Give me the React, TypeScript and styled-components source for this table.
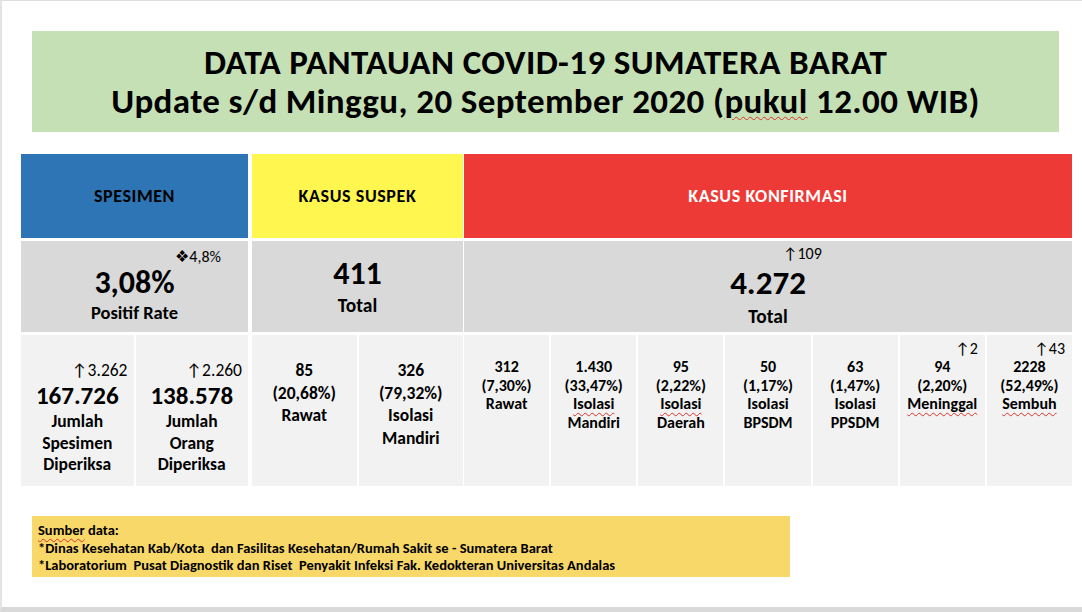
import React from "react";
import styled, { createGlobalStyle } from "styled-components";

const Global = createGlobalStyle`
  html, body { margin: 0; padding: 0; background: #ffffff; }
  body { font-family: "Carlito", "Lato", "Liberation Sans", sans-serif; color: #000; }
  * { box-sizing: border-box; }
`;

const Slide = styled.div`
  width: 1082px;
  height: 612px;
  background: #fff;
  border-top: 1px solid #dedede;
  border-left: 2px solid #e4e4e4;
  border-bottom: 5px solid #d9d9d9;
  display: flex;
  flex-direction: column;
  padding: 30px 10px 0 19px;
`;

const TitleBox = styled.div`
  margin: 0 13px 0 11px;
  height: 101px;
  background: #c5e0b4;
  display: flex;
  flex-direction: column;
  align-items: center;
  justify-content: center;
  gap: 4px;
`;

const TitleLine = styled.div`
  font-size: 35px;
  font-weight: 700;
  line-height: 35px;
  letter-spacing: 0.4px;
  white-space: nowrap;
`;

const Squiggle = styled.span`
  text-decoration: underline wavy #d9342b;
  text-decoration-thickness: 1px;
  text-underline-offset: 3px;
`;

const Table = styled.div`
  margin-top: 22px;
  width: 1051px;
  display: flex;
  flex-direction: column;
  gap: 3px;
`;

const Row = styled.div<{ $h: number }>`
  display: flex;
  height: ${(p) => p.$h}px;
`;

const Group = styled.div<{ $w: number; $gapRight: number }>`
  width: ${(p) => p.$w}px;
  margin-right: ${(p) => p.$gapRight}px;
  display: flex;
  gap: 2px;
  flex-shrink: 0;
`;

const HeadCell = styled.div<{ $bg: string; $fg: string }>`
  flex: 1;
  background: ${(p) => p.$bg};
  color: ${(p) => p.$fg};
  display: flex;
  align-items: center;
  justify-content: center;
  font-size: 18px;
  letter-spacing: 0.6px;
  font-weight: 700;
  padding-bottom: 1px;
`;

const SumCell = styled.div`
  flex: 1;
  background: #d9d9d9;
  display: flex;
  flex-direction: column;
  align-items: center;
  justify-content: center;
`;

const SumDelta = styled.div<{ $pr?: number; $pl?: number; $lh: number }>`
  align-self: stretch;
  text-align: ${(p) => (p.$pr !== undefined ? "right" : "left")};
  padding-right: ${(p) => p.$pr ?? 0}px;
  padding-left: ${(p) => p.$pl ?? 0}px;
  font-size: 16px;
  line-height: ${(p) => p.$lh}px;
  white-space: nowrap;
`;

const BigValue = styled.div<{ $size: number; $lh: number }>`
  font-size: ${(p) => p.$size}px;
  font-weight: 700;
  line-height: ${(p) => p.$lh}px;
`;

const Label = styled.div<{ $size: number; $lh: number }>`
  font-size: ${(p) => p.$size}px;
  font-weight: 700;
  line-height: ${(p) => p.$lh}px;
`;

const DetailCell = styled.div<{ $pt: number }>`
  flex: 1;
  background: #f2f2f2;
  display: flex;
  flex-direction: column;
  align-items: center;
  padding-top: ${(p) => p.$pt}px;
  text-align: center;
`;

const Delta = styled.div<{ $h: number; $size: number; $pr: number }>`
  align-self: stretch;
  text-align: right;
  height: ${(p) => p.$h}px;
  line-height: ${(p) => p.$h}px;
  font-size: ${(p) => p.$size}px;
  padding-right: ${(p) => p.$pr}px;
  white-space: nowrap;
`;

const DetailValue = styled.div`
  font-size: 25px;
  font-weight: 700;
  line-height: 31px;
`;

const DetailText = styled.div<{ $size: number; $lh: number }>`
  font-size: ${(p) => p.$size}px;
  line-height: ${(p) => p.$lh}px;
  font-weight: 700;
  white-space: nowrap;
`;

const Footer = styled.div`
  margin: 30px 0 0 11px;
  width: 758px;
  height: 61px;
  background: #f9d86a;
  padding: 6px 6px;
  font-size: 14.5px;
  font-weight: 700;
  line-height: 17.5px;
  white-space: pre;
`;

const Arrow = () => <span>↑</span>;

type Konf = { v: string; p: string; l: string[]; d?: string; sq?: boolean };

const konf: Konf[] = [
  { v: "312", p: "(7,30%)", l: ["Rawat"] },
  { v: "1.430", p: "(33,47%)", l: ["Isolasi", "Mandiri"], sq: true },
  { v: "95", p: "(2,22%)", l: ["Isolasi", "Daerah"], sq: true },
  { v: "50", p: "(1,17%)", l: ["Isolasi", "BPSDM"] },
  { v: "63", p: "(1,47%)", l: ["Isolasi", "PPSDM"] },
  { v: "94", p: "(2,20%)", l: ["Meninggal"], d: "2", sq: true },
  { v: "2228", p: "(52,49%)", l: ["Sembuh"], d: "43", sq: true },
];

export default function App() {
  return (
    <>
      <Global />
      <Slide>
        <TitleBox>
          <TitleLine>DATA PANTAUAN COVID-19 SUMATERA BARAT</TitleLine>
          <TitleLine>
            Update s/d Minggu, 20 September 2020 (<Squiggle>pukul</Squiggle> 12.00 WIB)
          </TitleLine>
        </TitleBox>

        <Table>
          <Row $h={84}>
            <Group $w={227} $gapRight={4}>
              <HeadCell $bg="#2e75b6" $fg="#000">SPESIMEN</HeadCell>
            </Group>
            <Group $w={211} $gapRight={1}>
              <HeadCell $bg="#fff64f" $fg="#000">KASUS SUSPEK</HeadCell>
            </Group>
            <Group $w={608} $gapRight={0}>
              <HeadCell $bg="#ee3a36" $fg="#fff">KASUS KONFIRMASI</HeadCell>
            </Group>
          </Row>

          <Row $h={91}>
            <Group $w={227} $gapRight={4}>
              <SumCell>
                <SumDelta $pr={27} $lh={16}>❖4,8%</SumDelta>
                <BigValue $size={32} $lh={36}>3,08%</BigValue>
                <Label $size={18.5} $lh={24}>Positif Rate</Label>
              </SumCell>
            </Group>
            <Group $w={211} $gapRight={1}>
              <SumCell>
                <BigValue $size={32} $lh={36}>411</BigValue>
                <Label $size={19.5} $lh={26}>Total</Label>
              </SumCell>
            </Group>
            <Group $w={608} $gapRight={0}>
              <SumCell>
                <SumDelta $pl={319} $lh={18}>
                  <Arrow />109
                </SumDelta>
                <BigValue $size={33} $lh={40}>4.272</BigValue>
                <Label $size={19.5} $lh={26}>Total</Label>
              </SumCell>
            </Group>
          </Row>

          <Row $h={151}>
            <Group $w={227} $gapRight={4}>
              <DetailCell $pt={25}>
                <Delta $h={20} $size={17.5} $pr={6}>
                  <Arrow />3.262
                </Delta>
                <DetailValue>167.726</DetailValue>
                <DetailText $size={17.5} $lh={21.5}>Jumlah</DetailText>
                <DetailText $size={17.5} $lh={21.5}>Spesimen</DetailText>
                <DetailText $size={17.5} $lh={21.5}>Diperiksa</DetailText>
              </DetailCell>
              <DetailCell $pt={25}>
                <Delta $h={20} $size={17.5} $pr={6}>
                  <Arrow />2.260
                </Delta>
                <DetailValue>138.578</DetailValue>
                <DetailText $size={17.5} $lh={21.5}>Jumlah</DetailText>
                <DetailText $size={17.5} $lh={21.5}>Orang</DetailText>
                <DetailText $size={17.5} $lh={21.5}>Diperiksa</DetailText>
              </DetailCell>
            </Group>
            <Group $w={211} $gapRight={1}>
              <DetailCell $pt={24}>
                <DetailText $size={17.5} $lh={22.5}>85</DetailText>
                <DetailText $size={17.5} $lh={22.5}>(20,68%)</DetailText>
                <DetailText $size={17.5} $lh={22.5}>Rawat</DetailText>
              </DetailCell>
              <DetailCell $pt={24}>
                <DetailText $size={17.5} $lh={22.5}>326</DetailText>
                <DetailText $size={17.5} $lh={22.5}>(79,32%)</DetailText>
                <DetailText $size={17.5} $lh={22.5}>Isolasi</DetailText>
                <DetailText $size={17.5} $lh={22.5}>Mandiri</DetailText>
              </DetailCell>
            </Group>
            <Group $w={608} $gapRight={0}>
              {konf.map((k) => (
                <DetailCell key={k.v} $pt={5}>
                  <Delta $h={18} $size={16} $pr={7}>
                    {k.d ? (
                      <>
                        <Arrow />
                        {k.d}
                      </>
                    ) : (
                      ""
                    )}
                  </Delta>
                  <DetailText $size={16} $lh={18.5}>{k.v}</DetailText>
                  <DetailText $size={16} $lh={18.5}>{k.p}</DetailText>
                  {k.l.map((line, i) => (
                    <DetailText key={line} $size={16} $lh={18.5}>
                      {k.sq && i === 0 ? <Squiggle>{line}</Squiggle> : line}
                    </DetailText>
                  ))}
                </DetailCell>
              ))}
            </Group>
          </Row>
        </Table>

        <Footer>
          <div>
            <Squiggle>Sumber</Squiggle> data:
          </div>
          <div>*Dinas Kesehatan Kab/Kota  dan Fasilitas Kesehatan/Rumah Sakit se - Sumatera Barat</div>
          <div>*Laboratorium  Pusat Diagnostik dan Riset  Penyakit Infeksi Fak. Kedokteran Universitas Andalas</div>
        </Footer>
      </Slide>
    </>
  );
}
